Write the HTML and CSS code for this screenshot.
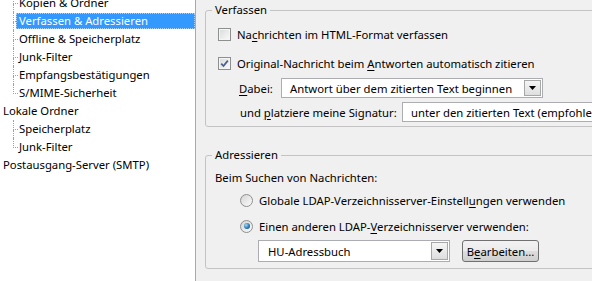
FILE: index.html
```html
<!DOCTYPE html>
<html lang="de">
<head>
    <meta charset="UTF-8">
    <title>Konten-Einstellungen</title>
    <link rel="stylesheet" href="styles.css">
</head>
<body>
    <div class="window">
        <nav class="tree">
            <ul>
                <li class="child"><span class="label">Kopien &amp; Ordner</span></li>
                <li class="child selected"><span class="label">Verfassen &amp; Adressieren</span></li>
                <li class="child"><span class="label">Offline &amp; Speicherplatz</span></li>
                <li class="child"><span class="label">Junk-Filter</span></li>
                <li class="child"><span class="label">Empfangsbestätigungen</span></li>
                <li class="child last"><span class="label">S/MIME-Sicherheit</span></li>
                <li class="account"><span class="label">Lokale Ordner</span></li>
                <li class="child"><span class="label">Speicherplatz</span></li>
                <li class="child last"><span class="label">Junk-Filter</span></li>
                <li class="account"><span class="label">Postausgang-Server (SMTP)</span></li>
            </ul>
        </nav>

        <main class="panel">
            <fieldset class="group compose">
                <legend>Verfassen</legend>
                <div class="row check-row">
                    <span class="checkbox"></span>
                    <span>Na<u>c</u>hrichten im HTML-Format verfassen</span>
                </div>
                <div class="row check-row">
                    <span class="checkbox checked">
                        <svg width="9" height="9" viewBox="0 0 9 9"><path d="M1.2 4.6 L3.5 7 L7.8 1.6" fill="none" stroke="#4b5e90" stroke-width="1.7"/></svg>
                    </span>
                    <span>Original-Nachricht beim <u>A</u>ntworten automatisch zitieren</span>
                </div>
                <div class="row field-row reply">
                    <span class="field-label"><u>D</u>abei:</span>
                    <div class="select reply-select">
                        <span class="value">Antwort über dem zitierten Text beginnen</span>
                        <span class="arrow"><svg width="7" height="4" viewBox="0 0 7 4"><path d="M0 0 H7 L3.5 4 Z" fill="#000"/></svg></span>
                    </div>
                </div>
                <div class="row field-row signature">
                    <span class="field-label">und <u>p</u>latziere meine Signatur:</span>
                    <div class="select signature-select">
                        <span class="value">unter den zitierten Text (empfohlen)</span>
                    </div>
                </div>
            </fieldset>

            <fieldset class="group addressing">
                <legend>Adressieren</legend>
                <div class="row intro">Beim Suchen von Nachrichten:</div>
                <div class="row radio-row first">
                    <span class="radio"></span>
                    <span>Globale LDAP-Verzeichnisserver-Einstell<u>u</u>ngen verwenden</span>
                </div>
                <div class="row radio-row">
                    <span class="radio checked"></span>
                    <span>Einen anderen LDAP-<u>V</u>erzeichnisserver verwenden:</span>
                </div>
                <div class="row book-row">
                    <div class="select book-select">
                        <span class="value">HU-Adressbuch</span>
                        <span class="arrow"><svg width="7" height="4" viewBox="0 0 7 4"><path d="M0 0 H7 L3.5 4 Z" fill="#000"/></svg></span>
                    </div>
                    <button class="button">B<u>e</u>arbeiten...</button>
                </div>
            </fieldset>
        </main>
    </div>
</body>
</html>
```

FILE: styles.css
```css
body {
    margin: 0;
    font-family: "Noto Sans", sans-serif;
    font-size: 11.3px;
    color: #000;
    background-color: #f0f0f0;
    overflow: hidden;
}
u {
    text-decoration-thickness: 1px;
    text-underline-offset: 2px;
}
.window {
    display: flex;
    height: 281px;
    overflow: hidden;
}

/* account tree */
.tree {
    width: 195px;
    flex-shrink: 0;
    background: #fff;
    border-right: 1px solid #a9a9a9;
    overflow: hidden;
}
.tree ul {
    list-style: none;
    margin: -6px 0 0 0;
    padding: 0;
}
.tree li {
    position: relative;
    height: 18px;
    display: flex;
    align-items: center;
    white-space: nowrap;
}
.tree li.child {
    padding-left: 16px;
}
.tree li.child::before {
    content: "";
    position: absolute;
    left: 13px;
    top: 0;
    width: 4px;
    height: 9px;
    border-left: 1px dotted #a0a0a0;
    border-bottom: 1px dotted #a0a0a0;
}
.tree li.child::after {
    content: "";
    position: absolute;
    left: 13px;
    top: 10px;
    bottom: 0;
    border-left: 1px dotted #a0a0a0;
}
.tree li.last::after {
    display: none;
}
.tree .label {
    flex: 1;
    height: 16px;
    line-height: 16px;
    padding-left: 3px;
}
.tree li.selected .label {
    background-color: #3399ff;
    color: #fff;
    outline: 1px dotted #a8d3ff;
    outline-offset: -1px;
}

/* settings panel */
.panel {
    flex: 1;
    padding: 2px 0 0 9px;
    overflow: hidden;
}
.group {
    width: 440px;
    margin: 0;
    border: 1px solid #c3c3c3;
    border-radius: 3px;
    padding: 5px 0 4px 6px;
}
.group legend {
    padding: 0 3px;
    line-height: 16px;
}
.addressing {
    margin-top: 20px;
    padding: 3px 0 6px 6px;
}
.row {
    display: flex;
    align-items: center;
    white-space: nowrap;
}
.check-row {
    height: 22px;
    padding-left: 6px;
}
.check-row + .check-row {
    margin-top: 7px;
}
.field-row {
    height: 20px;
    margin-top: 4px;
}
.reply {
    padding-left: 27px;
}
.reply .field-label {
    width: 42px;
}
.signature {
    padding-left: 28px;
}
.signature .field-label {
    width: 162px;
}
.intro {
    height: 22px;
    padding-left: 3px;
}
.radio-row {
    height: 22px;
    padding-left: 28px;
    margin-top: 4px;
}
.radio-row.first {
    margin-top: 1px;
}
.book-row {
    height: 22px;
    margin-top: 3px;
    padding-left: 46px;
}

/* checkbox and radio */
.checkbox {
    width: 11px;
    height: 11px;
    margin-right: 6px;
    border: 1px solid #8e8f8f;
    background: linear-gradient(135deg, #d9dadb, #fbfbfb);
    box-shadow: inset 0 0 0 1px #f5f5f5;
    display: flex;
    align-items: center;
    justify-content: center;
}
.radio {
    width: 11px;
    height: 11px;
    margin-right: 6px;
    border: 1px solid #8e8f8f;
    border-radius: 50%;
    background: linear-gradient(135deg, #d4d4d4, #fcfcfc);
    display: flex;
    align-items: center;
    justify-content: center;
}
.radio.checked::after {
    content: "";
    width: 6px;
    height: 6px;
    border-radius: 50%;
    background: radial-gradient(circle at 35% 35%, #a6dcf8, #2a78b6 55%, #163f66);
}

/* combo boxes */
.select {
    height: 100%;
    box-sizing: border-box;
    display: flex;
    align-items: center;
    background: #fff;
    border: 1px solid #abadb3;
}
.select .value {
    flex: 1;
    padding-left: 8px;
    overflow: hidden;
}
.select .arrow {
    width: 15px;
    align-self: stretch;
    margin: 1px;
    border: 1px solid #a7a7a7;
    background: linear-gradient(#f5f5f5, #dedede);
    display: flex;
    align-items: center;
    justify-content: center;
}
.reply-select {
    width: 262px;
}
.signature-select {
    width: 240px;
}
.book-select {
    width: 192px;
    height: 22px;
}
.book-select .value {
    padding-left: 9px;
}
.button {
    margin-left: 12px;
    width: 77px;
    height: 22px;
    padding: 0;
    font: inherit;
    color: #000;
    border: 1px solid #707070;
    border-radius: 3px;
    background: linear-gradient(#f2f2f2 0%, #ebebeb 50%, #dddddd 51%, #cfcfcf 100%);
}
```
